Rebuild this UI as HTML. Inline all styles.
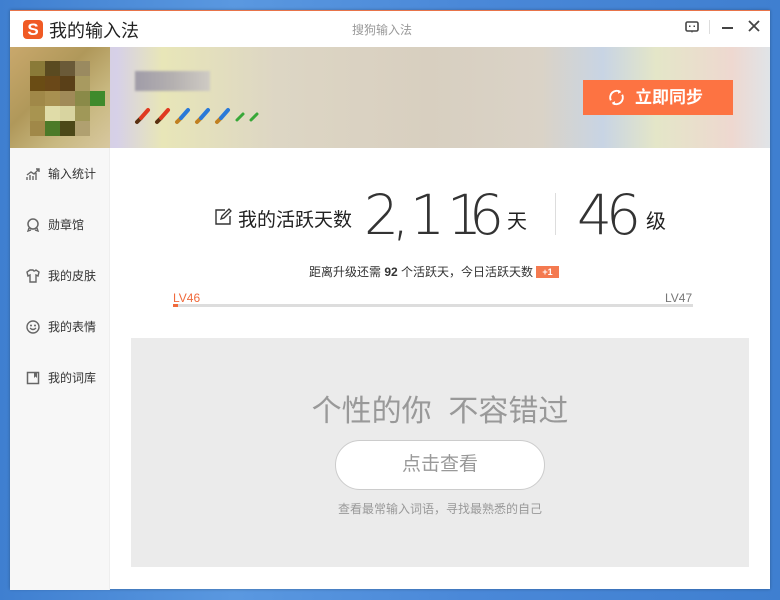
<!DOCTYPE html>
<html><head><meta charset="utf-8"><style>
*{margin:0;padding:0;box-sizing:border-box}
body{width:780px;height:600px;overflow:hidden;background:linear-gradient(90deg,#3f7fd0,#5a98e0 30%,#4a88d8 60%,#3f7fd0);font-family:"Liberation Sans","Noto Sans CJK SC",sans-serif;position:relative}
.win{position:absolute;left:10px;top:10px;width:760px;height:579px;background:#fff;border-top:1px solid #e8744a;box-shadow:0 0 3px rgba(0,0,0,.3)}
.title{height:36px;position:relative}
.logo{position:absolute;left:13px;top:9px;width:20px;height:19px;background:#f05a24;border-radius:4px;color:#fff;font-weight:bold;font-size:17px;line-height:19px;text-align:center}
.tt{position:absolute;left:39px;top:6px;font-size:18px;color:#222}
.ct{position:absolute;left:342px;top:10px;font-size:12px;color:#999}
.banner{position:absolute;top:36px;left:0;width:760px;height:101px;background:linear-gradient(90deg,#d8c8a8 0%,#d6d0e8 14%,#e8e6b8 20%,#ddd6c4 35%,#d8cfc0 55%,#dad3c7 70%,#c8d4e4 78%,#e4e6c8 85%,#eed8d0 95%,#e0e4e8 100%)}
.avatar{position:absolute;left:0;top:0;width:100px;height:101px;background:linear-gradient(135deg,#c9a86c,#b0985a 40%,#c8b880 70%,#d8c8a0)}
.avatar div{position:absolute;width:15px;height:15px}
.sync{position:absolute;left:573px;top:33px;width:150px;height:35px;background:#fd7342;color:#fff;font-size:17px;font-weight:bold;line-height:35px;padding-left:52px}
.side{position:absolute;left:0;top:137px;width:100px;height:442px;background:#f7f7f7;border-right:1px solid #eee}
.si{position:absolute;left:16px;font-size:12px;color:#333;display:flex;align-items:center}
.si svg{margin-right:8px}
.d{position:absolute;top:177px;font-family:"DejaVu Sans","Liberation Sans",sans-serif;font-weight:200;font-size:55px;line-height:55px;color:#333}
.gray{position:absolute;left:121px;top:327px;width:618px;height:229px;background:#ebebeb}
</style></head><body>
<div class="win">
 <div class="title"><div class="logo">S</div><div class="tt">我的输入法</div><div class="ct">搜狗输入法</div>
  <svg style="position:absolute;left:675px;top:9px" width="14" height="14" viewBox="0 0 14 14"><rect x="1" y="2" width="12" height="9" rx="1.5" fill="none" stroke="#444" stroke-width="1.6"/><rect x="4" y="5.5" width="1.5" height="1.5" fill="#444"/><rect x="8.5" y="5.5" width="1.5" height="1.5" fill="#444"/><path d="M6 11l1 2 1-2" fill="#444"/></svg>
  <div style="position:absolute;left:699px;top:9px;width:1px;height:14px;background:#ddd"></div>
  <div style="position:absolute;left:712px;top:16px;width:11px;height:2px;background:#444"></div>
  <svg style="position:absolute;left:738px;top:9px" width="12" height="12"><path d="M1 1L11 11M11 1L1 11" stroke="#444" stroke-width="1.8"/></svg>
 </div>
 <div class="banner">
  <div class="avatar">
   <div style="left:20px;top:14px;background:#8a7a38"></div><div style="left:35px;top:14px;background:#5a4a20"></div><div style="left:50px;top:14px;background:#6a5a38"></div><div style="left:65px;top:14px;background:#9a8a60"></div>
   <div style="left:20px;top:29px;background:#6a4c14"></div><div style="left:35px;top:29px;background:#6a4818"></div><div style="left:50px;top:29px;background:#5a4018"></div><div style="left:65px;top:29px;background:#a89a60"></div>
   <div style="left:20px;top:44px;background:#a08848"></div><div style="left:35px;top:44px;background:#a89050"></div><div style="left:50px;top:44px;background:#a08a58"></div><div style="left:65px;top:44px;background:#8a8a48"></div><div style="left:80px;top:44px;background:#3f8a2c"></div>
   <div style="left:20px;top:59px;background:#a89450"></div><div style="left:35px;top:59px;background:#e0dca8"></div><div style="left:50px;top:59px;background:#d8d4a0"></div><div style="left:65px;top:59px;background:#a09858"></div>
   <div style="left:20px;top:74px;background:#a08848"></div><div style="left:35px;top:74px;background:#4c7a28"></div><div style="left:50px;top:74px;background:#4c4818"></div><div style="left:65px;top:74px;background:#b0a070"></div>
  </div>
  <div style="position:absolute;left:125px;top:24px;width:75px;height:20px;background:linear-gradient(90deg,#a09ca8,#b4b0b0,#cfcbc4);filter:blur(1px)"></div>
  <svg style="position:absolute;left:124px;top:58px" width="125" height="20" viewBox="0 0 125 20">
   <g stroke-linecap="round">
    <path d="M3 17l4-4" stroke="#5a3010" stroke-width="4"/><path d="M7 13l7-8" stroke="#e03a20" stroke-width="4"/>
    <path d="M23 17l4-4" stroke="#5a3010" stroke-width="4"/><path d="M27 13l7-8" stroke="#e03a20" stroke-width="4"/>
    <path d="M43 17l4-4" stroke="#c08020" stroke-width="4"/><path d="M47 13l7-8" stroke="#2a7ad8" stroke-width="4"/>
    <path d="M63 17l4-4" stroke="#c08020" stroke-width="4"/><path d="M67 13l7-8" stroke="#2a7ad8" stroke-width="4"/>
    <path d="M83 17l4-4" stroke="#c08020" stroke-width="4"/><path d="M87 13l7-8" stroke="#2a7ad8" stroke-width="4"/>
    <path d="M103 15l6-6" stroke="#38a838" stroke-width="3"/>
    <path d="M117 15l6-6" stroke="#38a838" stroke-width="3"/>
   </g></svg>
  <div class="sync"><svg style="position:absolute;left:24px;top:8px" width="19" height="19" viewBox="0 0 20 20"><path d="M4 13A7 7 0 0 1 14 4M16 7A7 7 0 0 1 6 16" fill="none" stroke="#fff" stroke-width="2"/><path d="M12 2l3 2.5-3.5 1.5z M8 18l-3-2.5 3.5-1.5z" fill="#fff"/></svg>立即同步</div>
 </div>
 <div class="side">
  <div class="si" style="top:17px"><svg width="14" height="14" viewBox="0 0 14 14"><path d="M1 13V10M4 13V8M7 13V9M10 13V6M1 8l4-3 3 2 5-5M10 2h3v3" stroke="#666" stroke-width="1.4" fill="none"/></svg>输入统计</div>
  <div class="si" style="top:68px"><svg width="14" height="14" viewBox="0 0 14 14"><circle cx="7" cy="6" r="5" fill="none" stroke="#666" stroke-width="1.5"/><path d="M3 10l-1 3 3-1M11 10l1 3-3-1" stroke="#666" stroke-width="1.4" fill="none"/></svg>勋章馆</div>
  <div class="si" style="top:119px"><svg width="14" height="14" viewBox="0 0 14 14"><path d="M4 1L1 3l1 4 2-1v7h6V6l2 1 1-4-3-2q-2 2-3 0z" fill="none" stroke="#666" stroke-width="1.4"/></svg>我的皮肤</div>
  <div class="si" style="top:170px"><svg width="14" height="14" viewBox="0 0 14 14"><circle cx="7" cy="7" r="6" fill="none" stroke="#666" stroke-width="1.4"/><circle cx="5" cy="5.5" r="1" fill="#666"/><circle cx="9" cy="5.5" r="1" fill="#666"/><path d="M4 8q3 3 6 0" stroke="#666" fill="none" stroke-width="1.3"/></svg>我的表情</div>
  <div class="si" style="top:221px"><svg width="14" height="14" viewBox="0 0 14 14"><rect x="1.5" y="1.5" width="11" height="11" fill="none" stroke="#666" stroke-width="1.5"/><path d="M8 1v6l1.5-1.5L11 7V1z" fill="#666"/></svg>我的词库</div>
 </div>
 <svg style="position:absolute;left:204px;top:197px" width="18" height="18" viewBox="0 0 18 18"><path d="M11 2H2v14h14V8" fill="none" stroke="#333" stroke-width="1.4"/><path d="M7 11l1-3 7-7 2 2-7 7z" fill="none" stroke="#333" stroke-width="1.3"/></svg>
 <div style="position:absolute;left:228px;top:194px;font-size:19px;color:#222">我的活跃天数</div>
 <div class="d" style="left:354px">2</div>
 <div class="d" style="left:382px">,</div>
 <div class="d" style="left:400px">1</div>
 <div class="d" style="left:437px">1</div>
 <div class="d" style="left:459px">6</div>
 <div style="position:absolute;left:497px;top:194px;font-size:20px;color:#222">天</div>
 <div style="position:absolute;left:545px;top:182px;width:1px;height:42px;background:#ddd"></div>
 <div class="d" style="left:567px">4</div>
 <div class="d" style="left:596px">6</div>
 <div style="position:absolute;left:636px;top:194px;font-size:20px;color:#222">级</div>
 <div style="position:absolute;left:299px;top:252px;font-size:12px;color:#333">距离升级还需 <b>92</b> 个活跃天，今日活跃天数 <span style="display:inline-block;background:#f47a50;color:#fff;font-size:9px;font-weight:bold;padding:0 6px;line-height:12px;vertical-align:1px">+1</span></div>
 <div style="position:absolute;left:163px;top:280px;font-size:12px;color:#f06a3c">LV46</div>
 <div style="position:absolute;left:655px;top:280px;font-size:12px;color:#777">LV47</div>
 <div style="position:absolute;left:163px;top:293px;width:520px;height:3px;background:#ddd"><div style="width:5px;height:3px;background:#f06a3c"></div></div>
 <div class="gray">
  <div style="position:absolute;left:0;width:618px;top:48px;text-align:center;font-size:30px;color:#999">个性的你&nbsp; 不容错过</div>
  <div style="position:absolute;left:204px;top:102px;width:210px;height:50px;border:1px solid #ccc;border-radius:25px;background:#fff;text-align:center;line-height:48px;font-size:19px;color:#999">点击查看</div>
  <div style="position:absolute;left:0;width:618px;top:162px;text-align:center;font-size:12px;color:#999">查看最常输入词语，寻找最熟悉的自己</div>
 </div>
</div>
</body></html>
